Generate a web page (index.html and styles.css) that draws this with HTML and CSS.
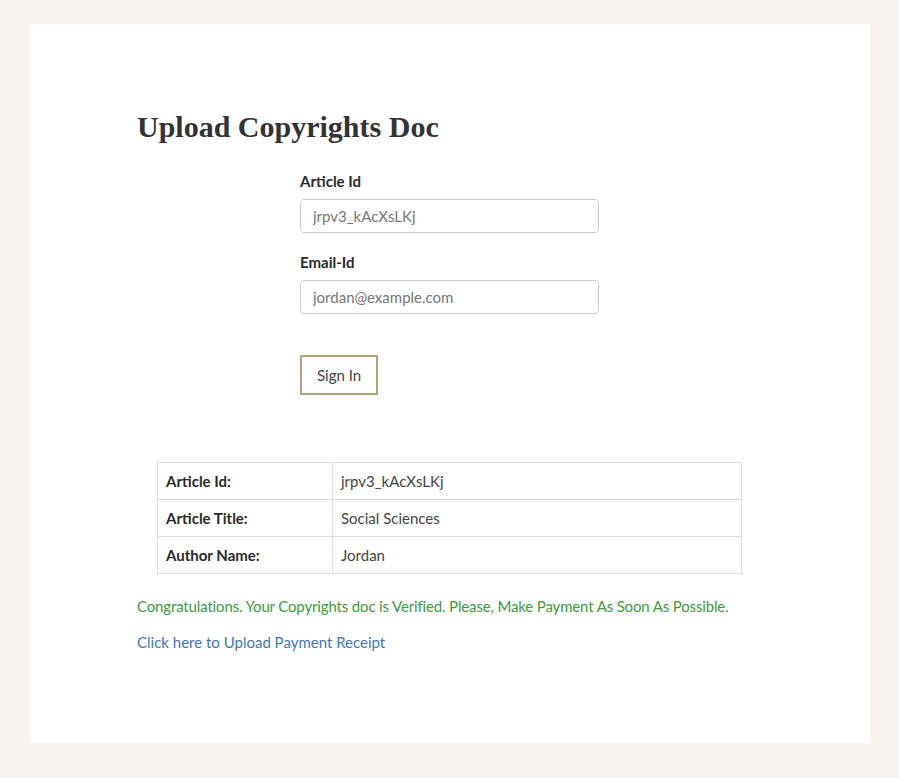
FILE: index.html
```html
<!DOCTYPE html>
<html lang="en">
<head>
    <title>Upload Copyrights Doc</title>
    <link rel="stylesheet" href="styles.css">
</head>
<body>
    <div class="page-card">
      <h1>Upload Copyrights Doc</h1>

      <form class="upload-form">
        <label for="articleId">Article Id</label>
        <input type="text" id="articleId" name="articleId" value="jrpv3_kAcXsLKj">

        <label for="emailId">Email-Id</label>
        <input type="text" id="emailId" name="emailId" value="jordan@example.com">

        <button type="submit">Sign In</button>
      </form>

      <table class="doc-table">
        <tr>
          <th>Article Id:</th>
          <td>jrpv3_kAcXsLKj</td>
        </tr>
        <tr>
          <th>Article Title:</th>
          <td>Social Sciences</td>
        </tr>
        <tr>
          <th>Author Name:</th>
          <td>Jordan</td>
        </tr>
      </table>

      <p class="success">Congratulations. Your Copyrights doc is Verified. Please, Make Payment As Soon As Possible.</p>
      <a class="receipt-link" href="#">Click here to Upload Payment Receipt</a>
    </div>
</body>
</html>
```

FILE: styles.css
```css
html, body {
  margin: 0;
  background-color: #f8f5f0;
}

body {
  padding: 24px 29px 35px 30px;
  font-family: "Lato", "Liberation Sans", sans-serif;
  font-size: 15px;
  color: #333;
}

.page-card {
  background-color: #fff;
  height: 719px;
  box-sizing: border-box;
  padding: 85px 107px 0 107px;
}

h1 {
  margin: 0 0 27px 0;
  font-family: "Liberation Serif", "DejaVu Serif", serif;
  font-size: 30px;
  font-weight: bold;
  color: #333;
  line-height: 36px;
}

.upload-form {
  margin-left: 163px;
  width: 299px;
}

label {
  display: block;
  font-weight: bold;
  font-size: 15px;
  margin-bottom: 9px;
  color: #2a2a2a;
}

input[type="text"] {
  display: block;
  width: 100%;
  height: 34px;
  box-sizing: border-box;
  padding: 6px 12px;
  font-family: inherit;
  font-size: 15px;
  color: #777;
  border: 1px solid #ccc;
  border-radius: 4px;
  margin-bottom: 20px;
}

button[type="submit"] {
  margin-top: 21px;
  padding: 0 15px;
  height: 40px;
  background-color: #fff;
  color: #444;
  font-family: inherit;
  font-size: 15px;
  border: 2px solid #b89f75;
  border-radius: 0;
  cursor: pointer;
}

.doc-table {
  margin: 67px 0 0 20px;
  width: 585px;
  border-collapse: collapse;
}

.doc-table th,
.doc-table td {
  border: 1px solid #ddd;
  height: 36px;
  padding: 0 8px;
  text-align: left;
  font-size: 15px;
}

.doc-table th {
  width: 158px;
  font-weight: bold;
  color: #2a2a2a;
}

.doc-table td {
  color: #444;
}

.success {
  margin: 23px 0 0 0;
  color: #3d9b3d;
  font-size: 15px;
  letter-spacing: -0.15px;
}

.receipt-link {
  display: inline-block;
  margin-top: 18px;
  color: #3f78b5;
  text-decoration: none;
  font-size: 15px;
}
```
